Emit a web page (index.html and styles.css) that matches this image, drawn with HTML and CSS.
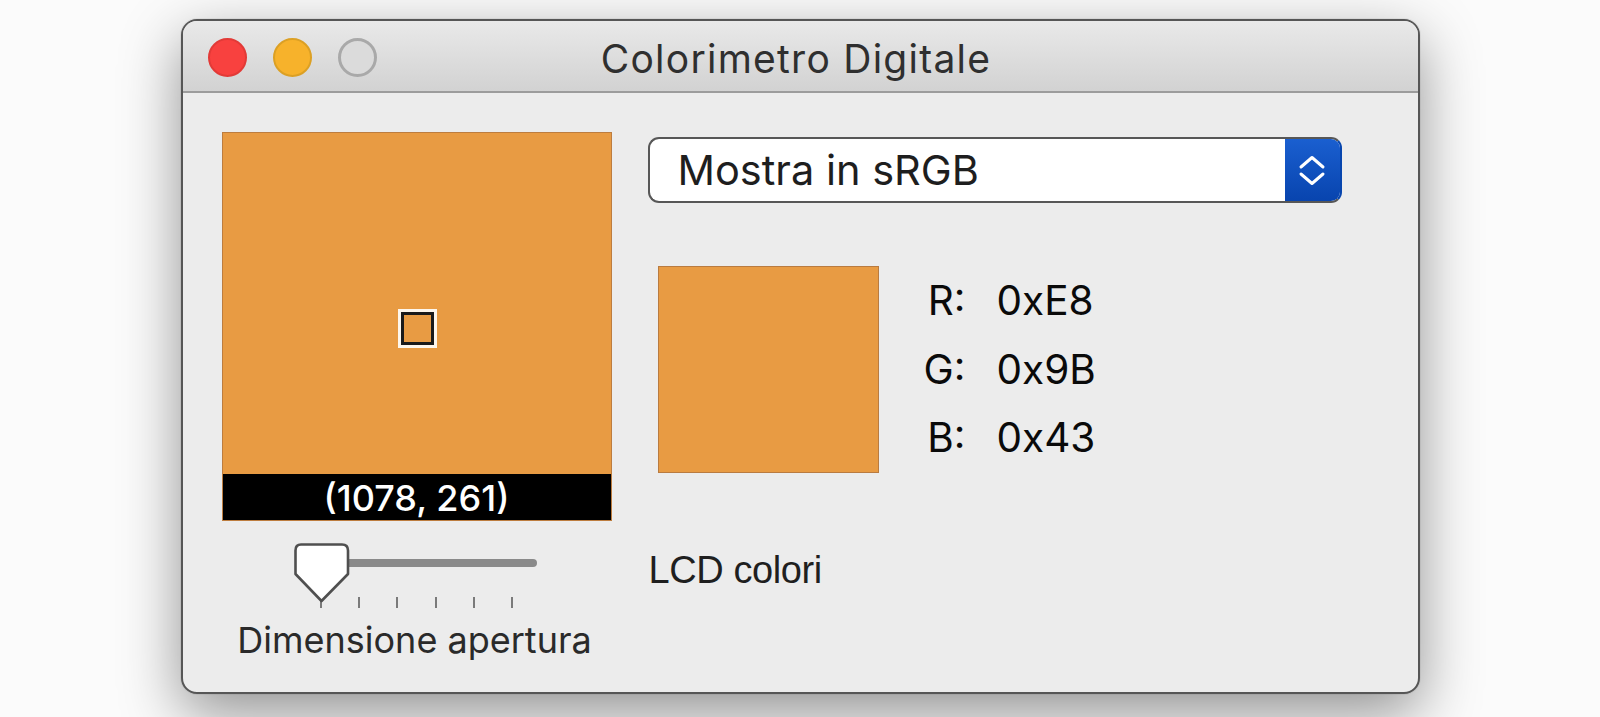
FILE: index.html
```html
<!DOCTYPE html>
<html lang="it">
<head>
<meta charset="utf-8">
<title>Colorimetro Digitale</title>
<link rel="stylesheet" href="styles.css">
</head>
<body>
<div class="stage">
  <div class="window">
    <div class="titlebar">
      <div class="lights">
        <span class="light red"></span>
        <span class="light yellow"></span>
        <span class="light gray"></span>
      </div>
      <div class="title">Colorimetro Digitale</div>
      <div class="spacer"></div>
    </div>
    <div class="content">
      <div class="left-col">
        <div class="swatch">
          <div class="marker"></div>
          <div class="coords">(1078, 261)</div>
        </div>
        <div class="slider">
          <div class="track"></div>
          <div class="ticks">
            <span class="tick"></span><span class="tick"></span><span class="tick"></span>
            <span class="tick"></span><span class="tick"></span><span class="tick"></span>
          </div>
          <svg class="thumb" width="56" height="60" viewBox="0 0 56 60">
            <path d="M7 1.5 H48 Q54 1.5 54 7.5 V31 L27.5 58 L1.5 31 V7.5 Q1.5 1.5 7 1.5 Z" fill="#ffffff" stroke="#4f4f4f" stroke-width="2.6" stroke-linejoin="round"/>
          </svg>
        </div>
        <div class="slider-label">Dimensione apertura</div>
      </div>
      <div class="right-col">
        <div class="popup">
          <div class="popup-text">Mostra in sRGB</div>
          <div class="popup-button">
            <svg width="30" height="40" viewBox="0 0 30 40">
              <path d="M4 17 L15 7.5 L26 17" fill="none" stroke="#ffffff" stroke-width="3" stroke-linecap="round" stroke-linejoin="round"/>
              <path d="M4 24 L15 33.5 L26 24" fill="none" stroke="#ffffff" stroke-width="3" stroke-linecap="round" stroke-linejoin="round"/>
            </svg>
          </div>
        </div>
        <div class="sample-row">
          <div class="sample"></div>
          <div class="values">
            <span class="lbl">R:</span><span class="val">0xE8</span>
            <span class="lbl">G:</span><span class="val">0x9B</span>
            <span class="lbl">B:</span><span class="val">0x43</span>
          </div>
        </div>
        <div class="lcd">LCD colori</div>
      </div>
    </div>
  </div>
</div>
</body>
</html>
```
FILE: styles.css
```css
* { box-sizing: border-box; }

html, body {
  margin: 0;
  padding: 0;
  background: #ffffff;
  overflow: hidden;
}

.stage {
  width: 1600px;
  height: 717px;
  padding-top: 19px;
  display: flex;
  justify-content: center;
  align-items: flex-start;
  background: #fbfbfb;
}

.window {
  width: 1239px;
  height: 675px;
  border: 2px solid #565656;
  border-radius: 16px;
  overflow: hidden;
  background: #ececec;
  box-shadow: 0 20px 60px rgba(0, 0, 0, 0.42), 0 0 0 1px rgba(0,0,0,0.05);
  display: flex;
  flex-direction: column;
  font-family: "Inter", "Liberation Sans", sans-serif;
}

.titlebar {
  height: 72px;
  flex: none;
  border-bottom: 2px solid #9c9c9c;
  background: linear-gradient(#e9e9e9, #d2d2d2);
  display: grid;
  grid-template-columns: 1fr auto 1fr;
  align-items: center;
}

.lights {
  display: flex;
  gap: 26px;
  padding-left: 25px;
  padding-top: 3px;
}

.light {
  width: 39px;
  height: 39px;
  border-radius: 50%;
  display: block;
}

.light.red {
  background: #f8413f;
  border: 2px solid #e23a37;
}

.light.yellow {
  background: #f7b22b;
  border: 2px solid #dca024;
}

.light.gray {
  background: #dbdbdb;
  border: 3px solid #a9a9a9;
}

.title {
  font-size: 39px;
  line-height: 1;
  color: #2f2f2f;
  letter-spacing: 1.25px;
  margin-left: -8px;
  padding-top: 5px;
}

.content {
  flex: 1;
  display: flex;
  gap: 36px;
  padding: 39px 0 0 39px;
}

.left-col {
  width: 390px;
  display: flex;
  flex-direction: column;
}

.swatch {
  position: relative;
  width: 390px;
  height: 389px;
  background: #e89b43;
  border: 1px solid #bd7d3f;
  display: flex;
  flex-direction: column;
  justify-content: flex-end;
}

.marker {
  position: absolute;
  left: 175px;
  top: 176px;
  width: 39px;
  height: 39px;
  border: 3px solid #fdf6ec;
  box-shadow: inset 0 0 0 3px #1a1a1a;
}

.coords {
  height: 46px;
  background: #000000;
  color: #ffffff;
  font-size: 36px;
  font-weight: 500;
  line-height: 46px;
  text-align: center;
  padding-top: 1px;
}

.slider {
  position: relative;
  width: 243px;
  height: 65px;
  margin: 22px 0 0 72px;
}

.track {
  width: 226px;
  height: 8px;
  margin: 16px 0 0 17px;
  background: #8a8a8a;
  border-radius: 4px;
}

.ticks {
  display: flex;
  gap: 36.4px;
  margin: 30px 0 0 26px;
}

.tick {
  width: 2px;
  height: 11px;
  background: #7a7a7a;
  display: block;
}

.thumb {
  position: absolute;
  left: 0;
  top: 0;
}

.slider-label {
  font-size: 36px;
  line-height: 1;
  color: #2a2a2a;
  text-align: center;
  margin-top: 14px;
  margin-left: -4px;
}

.right-col {
  display: flex;
  flex-direction: column;
  margin-top: 5px;
}

.popup {
  width: 694px;
  height: 66px;
  border: 2px solid #575757;
  border-right-color: #0846ae;
  border-radius: 11px;
  background: #ffffff;
  overflow: hidden;
  display: flex;
  align-items: stretch;
}

.popup-text {
  flex: 1;
  font-size: 41.5px;
  line-height: 62px;
  color: #1e1e1e;
  padding-left: 28px;
}

.popup-button {
  width: 55px;
  background: linear-gradient(#1a5fd0, #0844ae);
  display: flex;
  align-items: center;
  justify-content: center;
}

.sample-row {
  display: flex;
  align-items: center;
  margin-top: 63px;
  margin-left: 10px;
}

.sample {
  width: 221px;
  height: 207px;
  background: #e89b43;
  border: 1px solid #b97b40;
}

.values {
  display: grid;
  grid-template-columns: 49px auto;
  column-gap: 31px;
  grid-auto-rows: 68.5px;
  align-items: center;
  margin-left: 38px;
  margin-top: -1px;
  font-size: 40.5px;
  color: #0a0a0a;
}

.lbl { text-align: right; }

.lcd {
  font-family: "Liberation Sans", sans-serif;
  font-size: 38px;
  line-height: 1;
  color: #1f1f1f;
  margin-top: 78px;
  margin-left: 1px;
  letter-spacing: -0.4px;
}
```
